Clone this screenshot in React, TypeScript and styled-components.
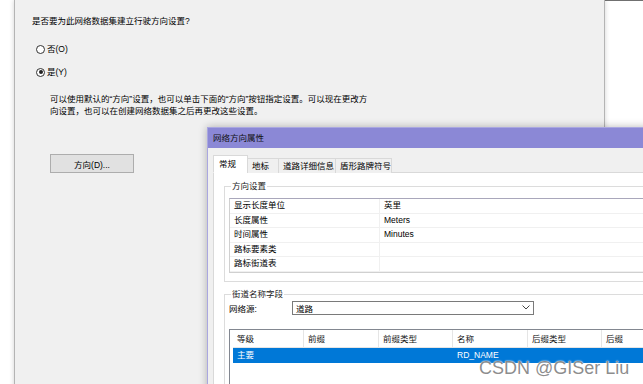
import React from "react";
import styled, { createGlobalStyle } from "styled-components";

const GlobalStyle = createGlobalStyle`
  html, body {
    margin: 0;
    padding: 0;
    background: #ffffff;
  }
  body {
    font-family: "Liberation Sans", "Noto Sans CJK SC", sans-serif;
    font-size: 8.5px;
    color: #000;
  }
`;

const props = [
  { name: "显示长度单位", value: "英里" },
  { name: "长度属性", value: "Meters" },
  { name: "时间属性", value: "Minutes" },
  { name: "路标要素类", value: "" },
  { name: "路标街道表", value: "" },
];

const columns = [
  { title: "等级", width: 71 },
  { title: "前缀", width: 75 },
  { title: "前缀类型", width: 74 },
  { title: "名称", width: 75 },
  { title: "后缀类型", width: 74 },
  { title: "后缀", width: 74 },
];

const rows = [["主要", "", "", "RD_NAME", "", ""]];

const Radio = ({ label, checked }: { label: string; checked?: boolean }) => (
  <RadioRow>
    <RadioCircle>{checked && <RadioDot />}</RadioCircle>
    <span>{label}</span>
  </RadioRow>
);

const App = () => {
  return (
    <>
      <GlobalStyle />
      <Desktop>
        <BackWindow />
        <MainDialog>
          <Question>是否要为此网络数据集建立行驶方向设置?</Question>
          <RadioGroup>
            <Radio label="否(O)" />
            <Radio label="是(Y)" checked />
          </RadioGroup>
          <Hint>
            可以使用默认的“方向”设置，也可以单击下面的“方向”按钮指定设置。可以现在更改方
            <br />
            向设置，也可以在创建网络数据集之后再更改这些设置。
          </Hint>
          <PushButton>方向(D)...</PushButton>
        </MainDialog>

        <PropWindow>
          <TitleBar>网络方向属性</TitleBar>
          <WindowBody>
            <TabRow>
              <Tab $active $width={35}>常规</Tab>
              <Tab $width={32}>地标</Tab>
              <Tab $width={58}>道路详细信息</Tab>
              <Tab $width={57}>盾形路牌符号</Tab>
            </TabRow>
            <TabPanel>
              <Group>
                <Legend>方向设置</Legend>
                <PropList>
                  {props.map((p) => (
                    <PropRow key={p.name}>
                      <PropName>{p.name}</PropName>
                      <PropValue>{p.value}</PropValue>
                    </PropRow>
                  ))}
                </PropList>
              </Group>

              <Group $second>
                <Legend>街道名称字段</Legend>
                <SourceRow>
                  <SourceLabel>网络源:</SourceLabel>
                  <Combo>
                    <span>道路</span>
                    <svg width="8" height="5" viewBox="0 0 8 5">
                      <polyline
                        points="0.5,0.5 4,4 7.5,0.5"
                        fill="none"
                        stroke="#444"
                        strokeWidth="1"
                      />
                    </svg>
                  </Combo>
                </SourceRow>
                <Grid>
                  <GridHeader>
                    {columns.map((c) => (
                      <HeaderCell key={c.title} style={{ width: c.width }}>
                        {c.title}
                      </HeaderCell>
                    ))}
                  </GridHeader>
                  {rows.map((r, i) => (
                    <GridRow key={i} $selected>
                      {r.map((v, j) => (
                        <GridCell key={j} style={{ width: columns[j].width }}>
                          {v}
                        </GridCell>
                      ))}
                    </GridRow>
                  ))}
                </Grid>
              </Group>
            </TabPanel>
          </WindowBody>
        </PropWindow>

        <Watermark>CSDN @GISer Liu</Watermark>
      </Desktop>
    </>
  );
};

export default App;

const Desktop = styled.div`
  position: relative;
  width: 643px;
  height: 384px;
  overflow: hidden;
  background: #ffffff;
`;

const BackWindow = styled.div`
  position: absolute;
  left: 600px;
  top: 0;
  width: 120px;
  height: 400px;
  background: #ffffff;
  border-top: 1px solid #707070;
`;

const MainDialog = styled.div`
  position: absolute;
  left: 14px;
  top: 0;
  width: 591px;
  height: 420px;
  box-sizing: border-box;
  padding: 15px 0 0 17px;
  background: #f0f0f0;
  border-left: 1px solid #b4b4b4;
  border-right: 1px solid #b4b4b4;
  box-shadow: 0 0 5px rgba(0, 0, 0, 0.18);
  display: flex;
  flex-direction: column;
  align-items: flex-start;
`;

const Question = styled.div`
  line-height: 12px;
`;

const RadioGroup = styled.div`
  margin: 16px 0 0 4px;
  display: flex;
  flex-direction: column;
  gap: 11px;
`;

const RadioRow = styled.div`
  display: flex;
  align-items: center;
  gap: 2px;
  line-height: 12px;
`;

const RadioCircle = styled.span`
  width: 9px;
  height: 9px;
  box-sizing: border-box;
  border: 1px solid #333;
  border-radius: 50%;
  background: #fff;
  display: flex;
  align-items: center;
  justify-content: center;
`;

const RadioDot = styled.span`
  width: 4px;
  height: 4px;
  border-radius: 50%;
  background: #222;
`;

const Hint = styled.p`
  margin: 15px 0 0 18px;
  line-height: 12px;
`;

const PushButton = styled.button`
  margin: 37px 0 0 18px;
  width: 84px;
  height: 19px;
  padding: 0;
  font: inherit;
  color: #000;
  background: #e1e1e1;
  border: 1px solid #adadad;
`;

const PropWindow = styled.div`
  position: absolute;
  left: 207px;
  top: 127px;
  width: 460px;
  height: 290px;
  background: #f0f0f0;
  border: 1px solid #aaa7e0;
  box-shadow: 0 0 8px rgba(0, 0, 0, 0.28);
  display: flex;
  flex-direction: column;
`;

const TitleBar = styled.div`
  height: 20px;
  line-height: 20px;
  padding-left: 5px;
  background: #8b88d6;
  color: #111;
`;

const WindowBody = styled.div`
  flex: 1;
  padding: 7px 0 0 5px;
  display: flex;
  flex-direction: column;
`;

const TabRow = styled.div`
  display: flex;
  align-items: flex-end;
  height: 18px;
  position: relative;
  z-index: 1;
`;

const Tab = styled.div<{ $active?: boolean; $width: number }>`
  width: ${(p) => p.$width}px;
  box-sizing: border-box;
  height: ${(p) => (p.$active ? 18 : 15)}px;
  line-height: ${(p) => (p.$active ? 17 : 15)}px;
  padding-left: ${(p) => (p.$active ? 5 : 4)}px;
  background: ${(p) => (p.$active ? "#ffffff" : "#f0f0f0")};
  border: 1px solid #d9d9d9;
  border-bottom: ${(p) => (p.$active ? "1px solid #ffffff" : "none")};
  margin-left: ${(p) => (p.$active ? 0 : -1)}px;
  white-space: nowrap;
`;

const TabPanel = styled.div`
  flex: 1;
  margin-top: -1px;
  background: #ffffff;
  border: 1px solid #d9d9d9;
  padding: 8px 0 0 10px;
`;

const Group = styled.fieldset<{ $second?: boolean }>`
  margin: ${(p) => (p.$second ? "7px" : "0")} 0 0 0;
  padding: ${(p) => (p.$second ? "0" : "6px")} 0 8px 4px;
  border: 1px solid #dcdcdc;
  border-right: none;
  min-width: 0;
`;

const Legend = styled.legend`
  padding: 0 1px;
  margin-left: 2px;
  line-height: 11px;
  color: #222;
`;

const PropList = styled.div`
  border: 1px solid #d0d0d0;
  border-top-color: #a9a7bb;
  border-right: none;
  background: #fff;
`;

const PropRow = styled.div`
  display: flex;
  height: 13.5px;
  line-height: 13.5px;
  border-bottom: 1px solid #f0f0f0;
`;

const PropName = styled.div`
  width: 145px;
  padding-left: 4px;
  border-right: 1px solid #f0f0f0;
`;

const PropValue = styled.div`
  padding-left: 4px;
`;

const SourceRow = styled.div`
  display: flex;
  align-items: center;
  margin-top: 1px;
`;

const SourceLabel = styled.span`
  width: 63px;
`;

const Combo = styled.div`
  width: 242px;
  height: 14px;
  box-sizing: border-box;
  border: 1px solid #7a7a7a;
  background: #fff;
  display: flex;
  align-items: center;
  justify-content: space-between;
  padding: 0 3px 0 3px;
`;

const Grid = styled.div`
  margin-top: 14px;
  height: 80px;
  border: 1px solid #828790;
  border-right: none;
  background: #fff;
  padding-left: 3px;
  overflow: hidden;
`;

const GridHeader = styled.div`
  display: flex;
  height: 18px;
  line-height: 18px;
  margin-left: -3px;
  padding-left: 3px;
`;

const HeaderCell = styled.div`
  flex-shrink: 0;
  box-sizing: border-box;
  padding-left: 4px;
  border-right: 1px solid #e5e5e5;
  border-bottom: 1px solid #e5e5e5;
  color: #111;
  white-space: nowrap;
`;

const GridRow = styled.div<{ $selected?: boolean }>`
  display: flex;
  height: 15px;
  line-height: 15px;
  background: ${(p) => (p.$selected ? "#0078d7" : "transparent")};
  color: ${(p) => (p.$selected ? "#ffffff" : "#000")};
`;

const GridCell = styled.div`
  flex-shrink: 0;
  box-sizing: border-box;
  padding-left: 4px;
  white-space: nowrap;
`;

const Watermark = styled.div`
  position: absolute;
  left: 479px;
  top: 359px;
  font-family: "Liberation Sans", sans-serif;
  font-size: 18px;
  line-height: 18px;
  color: rgba(120, 120, 120, 0.85);
  text-shadow: 0 0 2px #ffffff, 0 0 1px #ffffff;
  white-space: nowrap;
`;
